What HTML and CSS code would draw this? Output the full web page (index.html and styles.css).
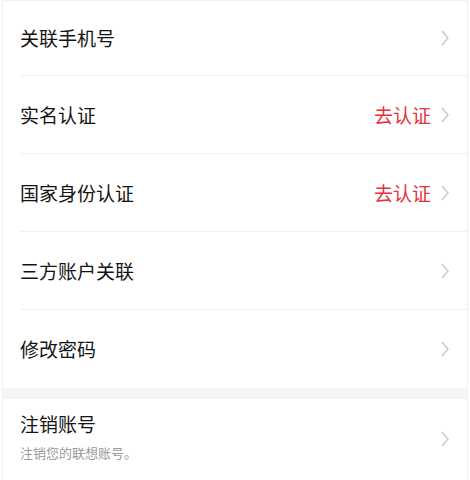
FILE: index.html
```html
<!DOCTYPE html>
<html lang="zh-CN">
<head>
<meta charset="utf-8">
<link rel="stylesheet" href="styles.css">
</head>
<body>
<div class="page">
  <div class="group">
    <div class="row first">
      <span class="title">关联手机号</span>
      <span class="right"><svg class="chev" viewBox="0 0 8 16"><polyline points="1,1 7,8 1,15"/></svg></span>
    </div>
    <div class="row">
      <span class="title">实名认证</span>
      <span class="right"><span class="action">去认证</span><svg class="chev" viewBox="0 0 8 16"><polyline points="1,1 7,8 1,15"/></svg></span>
    </div>
    <div class="row">
      <span class="title">国家身份认证</span>
      <span class="right"><span class="action">去认证</span><svg class="chev" viewBox="0 0 8 16"><polyline points="1,1 7,8 1,15"/></svg></span>
    </div>
    <div class="row">
      <span class="title">三方账户关联</span>
      <span class="right"><svg class="chev" viewBox="0 0 8 16"><polyline points="1,1 7,8 1,15"/></svg></span>
    </div>
    <div class="row last">
      <span class="title">修改密码</span>
      <span class="right"><svg class="chev" viewBox="0 0 8 16"><polyline points="1,1 7,8 1,15"/></svg></span>
    </div>
  </div>
  <div class="band"></div>
  <div class="group">
    <div class="row tall last">
      <span class="stack">
        <span class="title">注销账号</span>
        <span class="sub">注销您的联想账号。</span>
      </span>
      <span class="right"><svg class="chev" viewBox="0 0 8 16"><polyline points="1,1 7,8 1,15"/></svg></span>
    </div>
  </div>
</div>
</body>
</html>
```
FILE: styles.css
```css
html, body {
  margin: 0;
  padding: 0;
  background: #ffffff;
}
body {
  font-family: "Noto Sans CJK SC", "Noto Sans", sans-serif;
  width: 470px;
  height: 480px;
  overflow: hidden;
}
.page {
  margin: 0 2px;
  border-left: 1px solid #f0f0f0;
  border-right: 1px solid #f0f0f0;
  border-top: 1px solid #f2f2f2;
  height: 480px;
  box-sizing: border-box;
}
.group {
  padding-left: 17px;
}
.row {
  height: 78px;
  box-sizing: border-box;
  border-bottom: 1px solid #f0f0f0;
  display: flex;
  align-items: center;
  justify-content: space-between;
  padding-right: 18px;
}
.row.first {
  height: 75px;
}
.row.last {
  border-bottom: none;
}
.row.tall {
  height: 82px;
  align-items: flex-start;
  padding-top: 13px;
}
.title {
  font-size: 19px;
  color: #141414;
  line-height: 24px;
}
.stack {
  display: flex;
  flex-direction: column;
}
.sub {
  font-size: 13px;
  color: #9a9a9a;
  line-height: 18px;
  margin-top: 8px;
}
.right {
  display: flex;
  align-items: center;
  gap: 10px;
}
.tall .right {
  margin-top: 19px;
}
.action {
  font-size: 19px;
  color: #e3323a;
  line-height: 24px;
}
.chev {
  width: 8px;
  height: 16px;
  fill: none;
  stroke: #c8c8c8;
  stroke-width: 1.4;
}
.band {
  height: 11px;
  background: #f5f5f5;
}
```
